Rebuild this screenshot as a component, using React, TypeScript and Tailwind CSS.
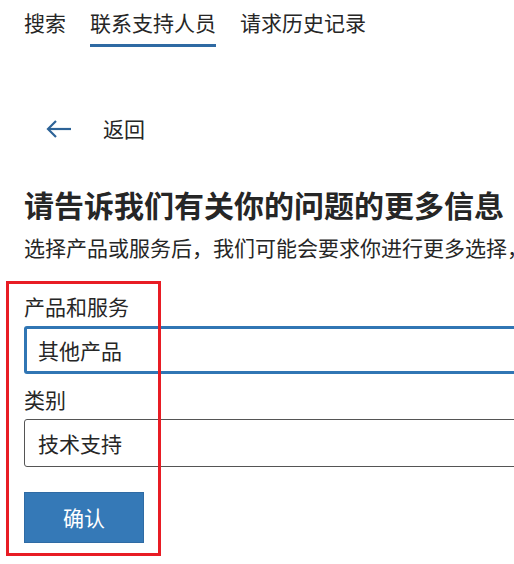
import React from 'react';

const tabs = [
  { label: '搜索', active: false },
  { label: '联系支持人员', active: true },
  { label: '请求历史记录', active: false },
];

const App = () => {
  return (
    <div
      className="relative w-[514px] h-[564px] overflow-hidden bg-white pl-6 text-[#262626]"
      style={{ fontFamily: '"Noto Sans CJK SC", "Noto Sans", sans-serif' }}
    >
      {/* tabs */}
      <nav className="flex gap-6 text-[21px] leading-[21px]">
        {tabs.map((tab) => (
          <div
            key={tab.label}
            className={`pt-3 pb-[11px] border-b-[3px] ${
              tab.active ? 'border-[#2f6aa3]' : 'border-transparent'
            }`}
          >
            {tab.label}
          </div>
        ))}
      </nav>

      {/* back */}
      <div className="mt-[71px] flex items-center text-[21px] leading-[21px]">
        <svg
          width="26"
          height="18"
          viewBox="0 0 26 18"
          className="ml-[22px]"
          fill="none"
          stroke="#2d6397"
          strokeWidth="2.2"
        >
          <path d="M25 9H2" />
          <path d="M10 1L2 9l8 8" />
        </svg>
        <span className="ml-[31px]">返回</span>
      </div>

      <h1 className="mt-[50px] text-[30px] leading-[30px] font-bold whitespace-nowrap">
        请告诉我们有关你的问题的更多信息
      </h1>
      <p className="mt-[18px] text-[21px] leading-[21px] whitespace-nowrap">
        选择产品或服务后，我们可能会要求你进行更多选择，
      </p>

      {/* form */}
      <div className="relative mt-[38px] text-[21px] leading-[21px]">
        <label className="block">产品和服务</label>
        <div className="mt-[9px] w-[620px] h-[48px] flex items-center pl-[11px] border-[3px] border-[#3176b4] rounded-[3px]">
          其他产品
        </div>

        <label className="block mt-[15px]">类别</label>
        <div className="mt-[9px] w-[620px] h-[48px] flex items-center pl-[13px] border border-[#555] rounded-[3px]">
          技术支持
        </div>

        <button className="mt-[25px] w-[120px] h-[51px] bg-[#3579b7] border border-[#2f6ba4] text-white text-[21px]">
          确认
        </button>
      </div>

      {/* annotation box */}
      <div className="absolute left-[6px] top-[281px] w-[155px] h-[275px] border-[3px] border-[#e81c24]" />
    </div>
  );
};

export default App;
